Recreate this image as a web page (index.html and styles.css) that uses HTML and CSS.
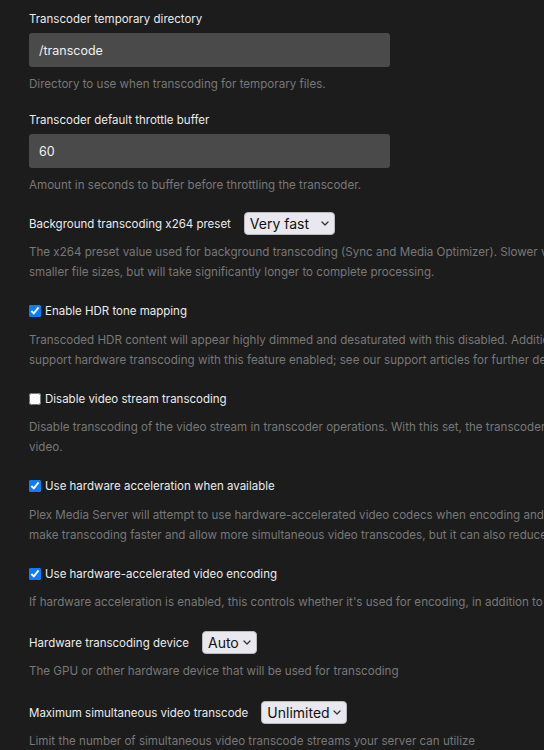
FILE: index.html
```html
<!DOCTYPE html>
<html lang="en">
<head>
  <meta charset="UTF-8" />
  <meta name="viewport" content="width=device-width, initial-scale=1.0"/>
  <title>Transcoder Settings</title>
  <link rel="stylesheet" href="styles.css">
</head>
<body>
  <main class="settings">

    <div class="setting field">
      <label class="label" for="tmp-dir">Transcoder temporary directory</label>
      <input class="text-input" id="tmp-dir" type="text" value="/transcode" />
      <p class="help">Directory to use when transcoding for temporary files.</p>
    </div>

    <div class="setting field">
      <label class="label" for="throttle">Transcoder default throttle buffer</label>
      <input class="text-input" id="throttle" type="text" value="60" />
      <p class="help">Amount in seconds to buffer before throttling the transcoder.</p>
    </div>

    <div class="setting row-setting">
      <div class="row">
        <label class="label" for="preset">Background transcoding x264 preset</label>
        <span class="select-wrap">
          <select id="preset" class="select preset">
            <option>Very fast</option>
            <option>Faster</option>
            <option>Fast</option>
            <option>Medium</option>
            <option>Slow</option>
          </select>
          <svg class="chevron" width="8" height="5" viewBox="0 0 8 5"><path d="M1 1l3 3 3-3" fill="none" stroke="#333" stroke-width="1.3" stroke-linecap="round" stroke-linejoin="round"/></svg>
        </span>
      </div>
      <p class="help">The x264 preset value used for background transcoding (Sync and Media Optimizer). Slower values will result in better video quality and<br>smaller file sizes, but will take significantly longer to complete processing.</p>
    </div>

    <div class="setting check-setting">
      <label class="check"><input type="checkbox" checked /> Enable HDR tone mapping</label>
      <p class="help">Transcoded HDR content will appear highly dimmed and desaturated with this disabled. Additionally, some devices may not<br>support hardware transcoding with this feature enabled; see our support articles for further details.</p>
    </div>

    <div class="setting check-setting">
      <label class="check"><input type="checkbox" /> Disable video stream transcoding</label>
      <p class="help">Disable transcoding of the video stream in transcoder operations. With this set, the transcoder will only be able to direct stream or copy the<br>video.</p>
    </div>

    <div class="setting check-setting">
      <label class="check"><input type="checkbox" checked /> Use hardware acceleration when available</label>
      <p class="help">Plex Media Server will attempt to use hardware-accelerated video codecs when encoding and decoding video. Hardware acceleration can<br>make transcoding faster and allow more simultaneous video transcodes, but it can also reduce video quality and compatibility.</p>
    </div>

    <div class="setting check-setting">
      <label class="check"><input type="checkbox" checked /> Use hardware-accelerated video encoding</label>
      <p class="help">If hardware acceleration is enabled, this controls whether it's used for encoding, in addition to decoding.</p>
    </div>

    <div class="setting row-setting">
      <div class="row">
        <label class="label" for="device">Hardware transcoding device</label>
        <span class="select-wrap">
          <select id="device" class="select device">
            <option>Auto</option>
          </select>
          <svg class="chevron" width="8" height="5" viewBox="0 0 8 5"><path d="M1 1l3 3 3-3" fill="none" stroke="#333" stroke-width="1.3" stroke-linecap="round" stroke-linejoin="round"/></svg>
        </span>
      </div>
      <p class="help">The GPU or other hardware device that will be used for transcoding</p>
    </div>

    <div class="setting row-setting">
      <div class="row">
        <label class="label" for="max-transcode">Maximum simultaneous video transcode</label>
        <span class="select-wrap">
          <select id="max-transcode" class="select limit">
            <option>Unlimited</option>
            <option>1</option>
            <option>2</option>
            <option>4</option>
          </select>
          <svg class="chevron" width="8" height="5" viewBox="0 0 8 5"><path d="M1 1l3 3 3-3" fill="none" stroke="#333" stroke-width="1.3" stroke-linecap="round" stroke-linejoin="round"/></svg>
        </span>
      </div>
      <p class="help">Limit the number of simultaneous video transcode streams your server can utilize</p>
    </div>

  </main>
</body>
</html>
```

FILE: styles.css
```css
body {
  margin: 0;
  background: #1c1c1c;
  color: #e6e6e6;
  font-family: Inter, "Noto Sans", sans-serif;
  overflow: hidden;
}

.settings {
  padding: 10px 0 0 29px;
  width: 900px;
}

.setting {
  margin-bottom: 20px;
}

.setting.field {
  margin-bottom: 17px;
}

.check-setting + .row-setting {
  margin-top: -1px;
}

.label {
  display: block;
  font-size: 11.5px;
  line-height: 18px;
  color: #ebebeb;
}

.text-input {
  display: block;
  box-sizing: border-box;
  width: 361px;
  height: 34px;
  margin-top: 5px;
  padding: 0 10px;
  background: #4a4a4a;
  border: none;
  border-radius: 3px;
  color: #f0f0f0;
  font-family: inherit;
  font-size: 12.5px;
  outline: none;
}

.help {
  margin: 7px 0 0;
  font-size: 11.6px;
  line-height: 20px;
  color: #787878;
  white-space: nowrap;
}

.row-setting .help {
  margin-top: 7px;
}

.check-setting .help {
  margin-top: 9.5px;
}

.row {
  display: flex;
  align-items: center;
  gap: 13px;
  height: 23px;
}

.select-wrap {
  position: relative;
  display: inline-flex;
}

.select {
  appearance: none;
  -webkit-appearance: none;
  box-sizing: border-box;
  height: 23px;
  padding: 0 0 0 5px;
  background: #e9e8ee;
  border: 1px solid #b9b9be;
  border-radius: 4px;
  color: #111;
  font-family: inherit;
  font-size: 14px;
}

.select.preset {
  width: 91px;
}

.select.device {
  width: 55px;
}

.select.limit {
  width: 86px;
}

.chevron {
  position: absolute;
  right: 6px;
  top: 9px;
  pointer-events: none;
}

.check {
  display: flex;
  align-items: center;
  gap: 4px;
  height: 18px;
  font-size: 11.5px;
  color: #ebebeb;
}

.check input {
  width: 12px;
  height: 12px;
  margin: 0;
  accent-color: #0a7cff;
}
```
